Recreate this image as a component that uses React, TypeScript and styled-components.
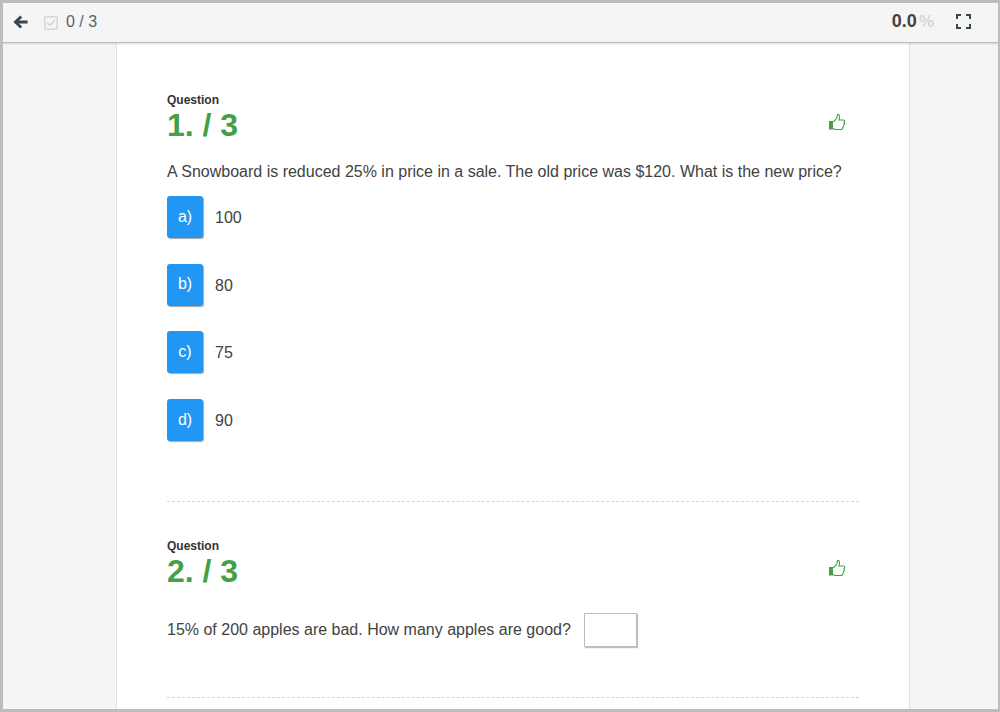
import React from 'react';
import styled, { createGlobalStyle } from 'styled-components';
import { FaRegCheckSquare } from 'react-icons/fa';

const GlobalStyle = createGlobalStyle`
  html, body {
    margin: 0;
    padding: 0;
    height: 100%;
    overflow: hidden;
  }
  body {
    font-family: "Liberation Sans", Arial, sans-serif;
    color: #424242;
  }
`;

const Frame = styled.div`
  box-sizing: border-box;
  width: 1000px;
  height: 712px;
  border: 3px solid #bdbdbd;
  border-right-width: 2px;
  background: #f5f5f5;
  display: flex;
  flex-direction: column;
  overflow: hidden;
`;

const Toolbar = styled.header`
  flex: none;
  box-sizing: border-box;
  height: 40px;
  background: #f5f5f5;
  border-bottom: 1px solid #bdbdbd;
  box-shadow: 0 1px 2px rgba(0, 0, 0, 0.15);
  display: flex;
  align-items: center;
  padding: 0 27px 2px 10px;
  position: relative;
`;

const BackIcon = styled.svg`
  width: 15px;
  height: 14px;
  margin-right: 15px;
  fill: #37474f;
`;

const CheckIcon = styled(FaRegCheckSquare)`
  width: 16px;
  height: 16px;
  color: #d6d6d6;
  margin: 2px 7px 0 0;
`;

const Count = styled.span`
  font-size: 16px;
  color: #616161;
`;

const Score = styled.span`
  margin-left: auto;
  font-size: 18px;
  font-weight: bold;
  color: #424242;
  margin-right: 22px;
`;

const Percent = styled.span`
  color: #d6d6d6;
  font-size: 17px;
  margin-left: 2px;
`;

const Sheet = styled.main`
  flex: 1;
  box-sizing: border-box;
  width: 794px;
  margin-left: 113px;
  background: #fff;
  border-left: 1px solid #e0e0e0;
  border-right: 1px solid #e0e0e0;
  padding: 13px 50px 0;
  overflow: hidden;
`;

const QuestionBlock = styled.section`
  border-bottom: 1px dashed #d6d6d6;
  padding-top: 37px;
`;

const QuestionHeader = styled.div`
  display: flex;
  align-items: center;
  justify-content: space-between;
`;

const Label = styled.div`
  font-size: 12px;
  line-height: 14px;
  font-weight: bold;
  color: #333;
`;

const Title = styled.h2`
  margin: 0;
  font-size: 32px;
  line-height: 36px;
  font-weight: bold;
  color: #43a047;
`;

const ThumbIcon = styled.svg`
  width: 18px;
  height: 18px;
  margin: 8px 13px 0 0;
`;

const Prompt = styled.p<{ $gap: number }>`
  margin: ${(p) => p.$gap}px 0 0;
  font-size: 16px;
  line-height: 22px;
  color: #424242;
`;

const Options = styled.div`
  margin-top: 13px;
  padding-bottom: 60px;
  display: flex;
  flex-direction: column;
  gap: 25.7px;
`;

const Option = styled.div`
  display: flex;
  align-items: center;
  gap: 12px;
`;

const OptionButton = styled.button`
  box-sizing: border-box;
  width: 36px;
  height: 42px;
  padding: 0 0 1px;
  border: none;
  border-radius: 3px;
  background: #2196f3;
  color: #fff;
  font: 16px "Liberation Sans", Arial, sans-serif;
  box-shadow: 1px 1px 1px rgba(0, 0, 0, 0.35);
`;

const OptionText = styled.span`
  font-size: 16px;
  color: #424242;
  padding-top: 2px;
`;

const InlineRow = styled.div`
  display: flex;
  align-items: center;
  gap: 13px;
  margin-top: 24px;
  padding-bottom: 50px;
`;

const AnswerInput = styled.input`
  box-sizing: border-box;
  width: 53px;
  height: 34px;
  border: 1px solid #bdbdbd;
  background: #fff;
  box-shadow: 1px 1px 1px rgba(0, 0, 0, 0.25);
  outline: none;
`;

const ArrowLeft = () => (
  <BackIcon viewBox="0 0 15 14">
    <path d="M7.200 0.400 L9.200 2.400 L6 5.400 H14.600 V8.600 H6 L9.200 11.600 L7.200 13.600 L0.400 7 Z" />
  </BackIcon>
);

const ThumbsUp = () => (
  <ThumbIcon viewBox="0 0 18 18">
    <rect x="1" y="8" width="4" height="8.500" fill="#43a047" />
    <path
      d="M5 8.500 C7 8 9.500 5 9.500 1.500 C11.500 1 12 3.500 11 7 H15.500 C17 7 17 9 16 9.500 C16.800 10.500 16.300 11.800 15.500 12 C16 13 15.500 14 14.800 14.300 C15 15.500 14 16.500 13 16.500 H8 C6.500 16.500 5.500 16 5 15.500"
      fill="none"
      stroke="#43a047"
      strokeWidth="1.100"
    />
  </ThumbIcon>
);

const FullscreenIcon = () => (
  <svg width="15" height="15" viewBox="0 0 15 15" fill="none" stroke="#37474f" strokeWidth="2">
    <path d="M1 5V1H5M10 1h4V5M14 10v4H10M5 14H1V10" />
  </svg>
);

const options = [
  { key: 'a)', text: '100' },
  { key: 'b)', text: '80' },
  { key: 'c)', text: '75' },
  { key: 'd)', text: '90' },
];

const App: React.FC = () => (
  <>
    <GlobalStyle />
    <Frame>
      <Toolbar>
        <ArrowLeft />
        <CheckIcon />
        <Count>0 / 3</Count>
        <Score>
          0.0<Percent>%</Percent>
        </Score>
        <FullscreenIcon />
      </Toolbar>
      <Sheet>
        <QuestionBlock>
          <QuestionHeader>
            <div>
              <Label>Question</Label>
              <Title>1. / 3</Title>
            </div>
            <ThumbsUp />
          </QuestionHeader>
          <Prompt $gap={18}>
            A Snowboard is reduced 25% in price in a sale. The old price was $120. What is the new price?
          </Prompt>
          <Options>
            {options.map((option) => (
              <Option key={option.key}>
                <OptionButton>{option.key}</OptionButton>
                <OptionText>{option.text}</OptionText>
              </Option>
            ))}
          </Options>
        </QuestionBlock>
        <QuestionBlock>
          <QuestionHeader>
            <div>
              <Label>Question</Label>
              <Title>2. / 3</Title>
            </div>
            <ThumbsUp />
          </QuestionHeader>
          <InlineRow>
            <Prompt $gap={0}>15% of 200 apples are bad. How many apples are good?</Prompt>
            <AnswerInput />
          </InlineRow>
        </QuestionBlock>
      </Sheet>
    </Frame>
  </>
);

export default App;
